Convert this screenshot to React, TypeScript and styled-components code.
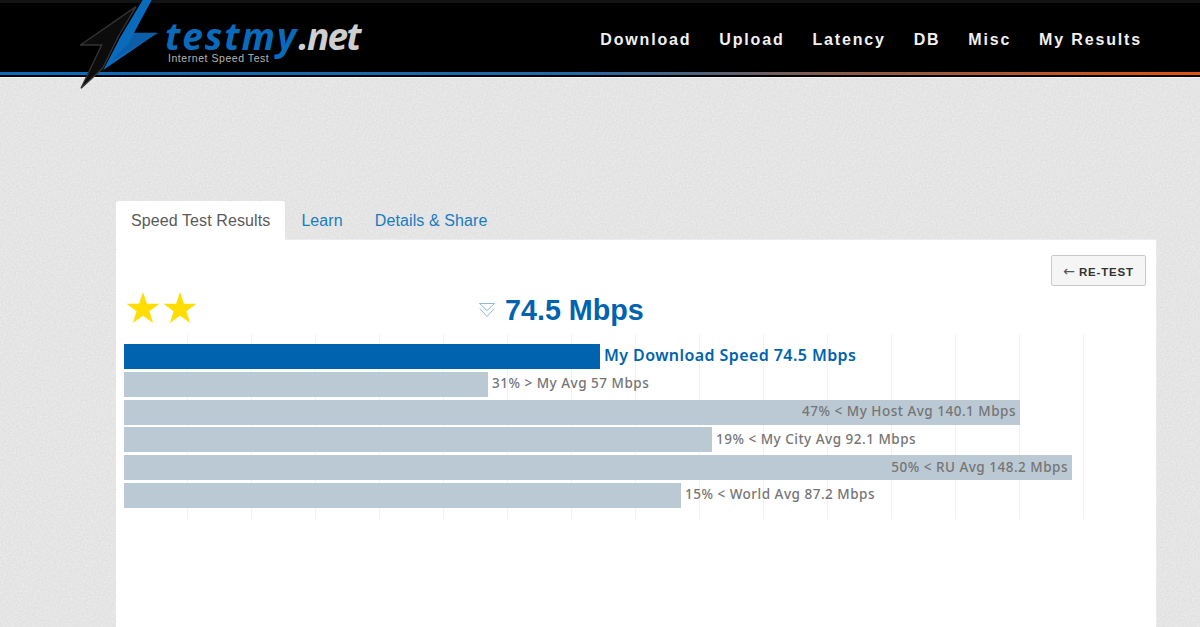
import React from "react";
import styled, { createGlobalStyle } from "styled-components";

const noise =
  "url(\"data:image/svg+xml,%3Csvg xmlns='http://www.w3.org/2000/svg' width='240' height='240'%3E%3Cfilter id='n'%3E%3CfeTurbulence type='fractalNoise' baseFrequency='0.55' numOctaves='2'/%3E%3CfeColorMatrix type='matrix' values='0 0 0 0 0.3 0 0 0 0 0.3 0 0 0 0 0.3 0.22 0 0 0 -0.05'/%3E%3C/filter%3E%3Crect width='240' height='240' filter='url(%23n)'/%3E%3C/svg%3E\")";

const GlobalStyle = createGlobalStyle`
  html, body {
    margin: 0;
    height: 100%;
    overflow: hidden;
    background: #eaeaea ${noise};
    font-family: "Liberation Sans", Arial, sans-serif;
  }
`;

const Header = styled.header`
  position: relative;
  height: 78px;
  box-sizing: border-box;
  background: #000;
  border-top: 3px solid #141414;
  border-bottom: 1px solid #f4f4f4;
  display: flex;
  flex-direction: column;
`;

const HeaderRow = styled.div`
  flex: 1;
  display: flex;
  align-items: center;
  justify-content: space-between;
  padding: 0 58px 0 165px;
`;

const ColorLine = styled.div`
  height: 3px;
  margin-bottom: 2px;
  background: linear-gradient(to right, #0a6bbd 0%, #1f69a8 48%, #8a5a48 70%, #e0530f 100%);
`;

const BoltSvg = styled.svg`
  position: absolute;
  left: 80px;
  top: -3px;
  z-index: 2;
`;

const Logo = styled.div`
  display: flex;
  flex-direction: column;
  margin-top: 9px;
`;

const LogoWord = styled.div`
  font-family: "Open Sans", sans-serif;
  font-size: 37px;
  font-weight: 700;
  font-style: italic;
  line-height: 32px;
  height: 32px;
  letter-spacing: 2px;
  color: #0a6bbd;
`;

const LogoNet = styled.span`
  color: #cfcfcf;
  letter-spacing: -1.8px;
`;

const LogoTag = styled.div`
  margin-left: 3px;
  font-size: 10.5px;
  line-height: 12px;
  letter-spacing: 0.55px;
  color: #b5b5b5;
`;

const Nav = styled.nav`
  display: flex;
  gap: 27.8px;
  margin-top: 4px;
`;

const NavLink = styled.a`
  font-size: 16px;
  font-weight: 700;
  letter-spacing: 1.85px;
  color: #f0f0f0;
`;

const Main = styled.main`
  padding: 123px 44px 0 116px;
`;

const Tabs = styled.div`
  display: flex;
  height: 39px;
`;

const Tab = styled.a<{ $active?: boolean }>`
  display: flex;
  align-items: center;
  padding: 0 ${(p) => (p.$active ? "15px" : "16px")};
  font-size: 16px;
  letter-spacing: 0.1px;
  border-radius: 3px 3px 0 0;
  color: ${(p) => (p.$active ? "#5a5a5a" : "#1a7cc0")};
  background: ${(p) => (p.$active ? "#fff" : "transparent")};
`;

const Card = styled.section`
  background: #fff;
  height: 387px;
  padding: 15px 10px 0 8px;
  box-sizing: border-box;
  box-shadow: 0 -1px 0 #e9edf1, 1px 0 0 #e6e9ee;
`;

const ButtonRow = styled.div`
  display: flex;
  justify-content: flex-end;
`;

const RetestButton = styled.button`
  width: 95px;
  height: 31px;
  padding: 0;
  background: #f5f5f5;
  border: 1px solid #c9c9c9;
  border-radius: 2px;
  font-family: "Liberation Sans", Arial, sans-serif;
  font-size: 11.5px;
  font-weight: 700;
  letter-spacing: 0.8px;
  color: #333;
`;

const ArrowGlyph = styled.span`
  font-family: "DejaVu Sans", sans-serif;
  font-size: 14px;
  font-weight: 400;
  letter-spacing: 0;
  margin-right: 4px;
  color: #555;
`;

const ResultRow = styled.div`
  display: grid;
  grid-template-columns: 355px auto;
  align-items: center;
  height: 48px;
`;

const Stars = styled.div`
  display: flex;
  gap: 3px;
  margin: -5px 0 0 2px;
`;

const Speed = styled.div`
  display: flex;
  align-items: center;
  gap: 10px;
  font-size: 28.7px;
  font-weight: 700;
  color: #0063b0;
`;

const Chart = styled.div`
  width: 961px;
  height: 185px;
  box-sizing: border-box;
  padding-top: 10px;
  display: flex;
  flex-direction: column;
  gap: 2.8px;
  background: repeating-linear-gradient(to right, transparent 0 63px, #f1f2f3 63px 64px);
`;

const Row = styled.div`
  display: flex;
  align-items: center;
  height: 25px;
`;

const Bar = styled.div<{ $primary?: boolean }>`
  height: 100%;
  flex: none;
  box-sizing: border-box;
  display: flex;
  align-items: center;
  justify-content: flex-end;
  padding-right: 4px;
  background: ${(p) => (p.$primary ? "#0063b0" : "#bbc9d4")};
`;

const Label = styled.span<{ $primary?: boolean; $inside?: boolean }>`
  font-family: "Noto Sans", sans-serif;
  font-weight: ${(p) => (p.$primary ? 600 : 500)};
  white-space: nowrap;
  margin-left: ${(p) => (p.$inside ? "0" : "4px")};
  margin-bottom: ${(p) => (p.$primary ? "4px" : "2px")};
  font-size: ${(p) => (p.$primary ? "16px" : "13.5px")};
  letter-spacing: ${(p) => (p.$primary ? "0.42px" : "0.5px")};
  color: ${(p) => (p.$primary ? "#0063b0" : "#757575")};
`;

const navItems = ["Download", "Upload", "Latency", "DB", "Misc", "My Results"];

const rows = [
  { width: 476, text: "My Download Speed 74.5 Mbps", primary: true },
  { width: 364, text: "31% > My Avg 57 Mbps" },
  { width: 896, text: "47% < My Host Avg 140.1 Mbps", inside: true },
  { width: 588, text: "19% < My City Avg 92.1 Mbps" },
  { width: 948, text: "50% < RU Avg 148.2 Mbps", inside: true },
  { width: 557, text: "15% < World Avg 87.2 Mbps" },
];

function Star() {
  return (
    <svg width="34" height="33" viewBox="0 0 35 34">
      <path d="M17.5 1l4.1 12.2h12.9l-10.4 7.6 3.9 12.2-10.5-7.5-10.5 7.5 3.9-12.2L.5 13.2h12.9z" fill="#ffdd00" />
    </svg>
  );
}

function DoubleChevron() {
  return (
    <svg width="16" height="16" viewBox="0 0 16 16" fill="none" stroke="#8db8dc" strokeWidth="1">
      <path d="M.5 1.5h15L8 8.5z" />
      <path d="M.8 6.5L8 14.5l7.2-8" />
    </svg>
  );
}

export default function App() {
  return (
    <>
      <GlobalStyle />
      <Header>
        <BoltSvg width="90" height="92" viewBox="0 0 90 92">
          <path d="M62.7 0H71.7L54 32.7H77.7L23.3 70 41 36z" fill="#0a6bbd" />
          <path d="M54 33H77.7L30 62 48 44z" fill="#0a5fa8" />
          <path d="M56 6.7L.5 45H21.7L1 88.3 22.7 68.3 38 37z" fill="#0c0c0c" stroke="#333" strokeWidth="1.4" />
        </BoltSvg>
        <HeaderRow>
          <Logo>
            <LogoWord>
              testmy<LogoNet>.net</LogoNet>
            </LogoWord>
            <LogoTag>Internet Speed Test</LogoTag>
          </Logo>
          <Nav>
            {navItems.map((item) => (
              <NavLink key={item}>{item}</NavLink>
            ))}
          </Nav>
        </HeaderRow>
        <ColorLine />
      </Header>
      <Main>
        <Tabs>
          <Tab $active>Speed Test Results</Tab>
          <Tab>Learn</Tab>
          <Tab>Details &amp; Share</Tab>
        </Tabs>
        <Card>
          <ButtonRow>
            <RetestButton>
              <ArrowGlyph>←</ArrowGlyph>RE-TEST
            </RetestButton>
          </ButtonRow>
          <ResultRow>
            <Stars>
              <Star />
              <Star />
            </Stars>
            <Speed>
              <DoubleChevron />
              74.5 Mbps
            </Speed>
          </ResultRow>
          <Chart>
            {rows.map((row) => (
              <Row key={row.text}>
                <Bar $primary={row.primary} style={{ width: row.width }}>
                  {row.inside && <Label $inside>{row.text}</Label>}
                </Bar>
                {!row.inside && <Label $primary={row.primary}>{row.text}</Label>}
              </Row>
            ))}
          </Chart>
        </Card>
      </Main>
    </>
  );
}
